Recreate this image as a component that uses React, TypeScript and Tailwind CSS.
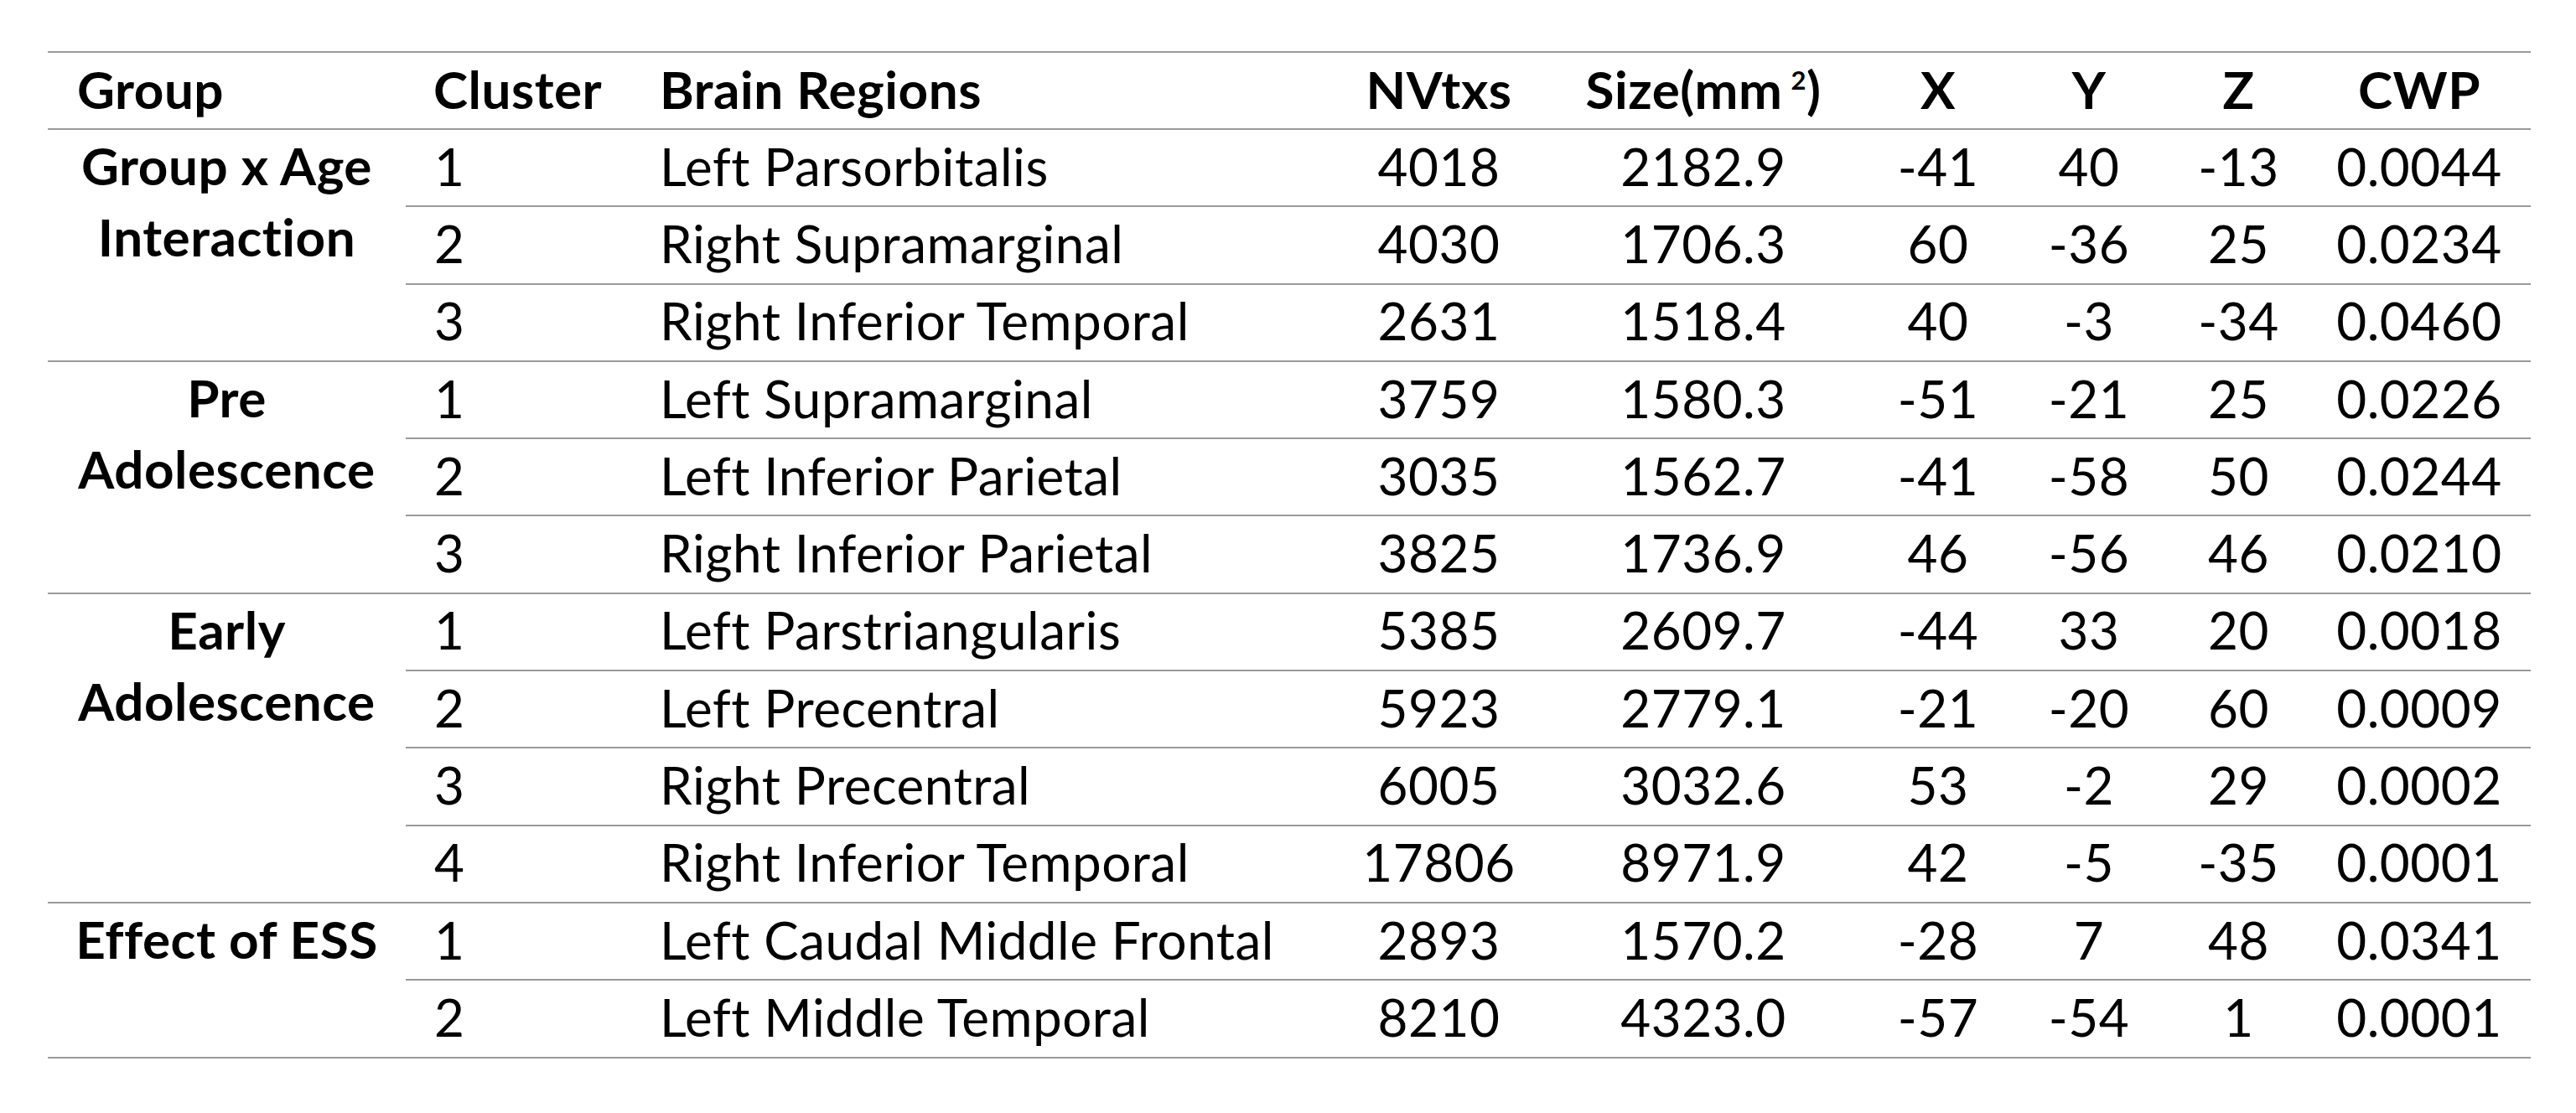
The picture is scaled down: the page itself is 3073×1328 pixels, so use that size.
import React from "react";

type Row = {
  cluster: string;
  region: string;
  nvtxs: string;
  size: string;
  x: string;
  y: string;
  z: string;
  cwp: string;
};

type Group = { label: string[]; rows: Row[] };

const groups: Group[] = [
  {
    label: ["Group x Age", "Interaction"],
    rows: [
      { cluster: "1", region: "Left Parsorbitalis", nvtxs: "4018", size: "2182.9", x: "-41", y: "40", z: "-13", cwp: "0.0044" },
      { cluster: "2", region: "Right Supramarginal", nvtxs: "4030", size: "1706.3", x: "60", y: "-36", z: "25", cwp: "0.0234" },
      { cluster: "3", region: "Right Inferior Temporal", nvtxs: "2631", size: "1518.4", x: "40", y: "-3", z: "-34", cwp: "0.0460" },
    ],
  },
  {
    label: ["Pre", "Adolescence"],
    rows: [
      { cluster: "1", region: "Left Supramarginal", nvtxs: "3759", size: "1580.3", x: "-51", y: "-21", z: "25", cwp: "0.0226" },
      { cluster: "2", region: "Left Inferior Parietal", nvtxs: "3035", size: "1562.7", x: "-41", y: "-58", z: "50", cwp: "0.0244" },
      { cluster: "3", region: "Right Inferior Parietal", nvtxs: "3825", size: "1736.9", x: "46", y: "-56", z: "46", cwp: "0.0210" },
    ],
  },
  {
    label: ["Early", "Adolescence"],
    rows: [
      { cluster: "1", region: "Left Parstriangularis", nvtxs: "5385", size: "2609.7", x: "-44", y: "33", z: "20", cwp: "0.0018" },
      { cluster: "2", region: "Left Precentral", nvtxs: "5923", size: "2779.1", x: "-21", y: "-20", z: "60", cwp: "0.0009" },
      { cluster: "3", region: "Right Precentral", nvtxs: "6005", size: "3032.6", x: "53", y: "-2", z: "29", cwp: "0.0002" },
      { cluster: "4", region: "Right Inferior Temporal", nvtxs: "17806", size: "8971.9", x: "42", y: "-5", z: "-35", cwp: "0.0001" },
    ],
  },
  {
    label: ["Effect of ESS"],
    rows: [
      { cluster: "1", region: "Left Caudal Middle Frontal", nvtxs: "2893", size: "1570.2", x: "-28", y: "7", z: "48", cwp: "0.0341" },
      { cluster: "2", region: "Left Middle Temporal", nvtxs: "8210", size: "4323.0", x: "-57", y: "-54", z: "1", cwp: "0.0001" },
    ],
  },
];

// column widths measured off the table
const numCols = [
  { key: "nvtxs", w: "w-[239px]" },
  { key: "size", w: "w-[392px]" },
  { key: "x", w: "w-[168px]" },
  { key: "y", w: "w-[192px]" },
  { key: "z", w: "w-[165px]" },
  { key: "cwp", w: "w-[266px]" },
] as const;

const DataRow = ({ row }: { row: Row }) => (
  <div className="flex h-[92.3px] items-center border-b-2 border-[#9a9a9a] pb-[5px]">
    <div className="w-[270px] pl-[34px]">{row.cluster}</div>
    <div className="w-[843px] pl-[33px] whitespace-nowrap">{row.region}</div>
    {numCols.map((c) => (
      <div key={c.key} className={`${c.w} text-center`}>
        {row[c.key]}
      </div>
    ))}
  </div>
);

export default function App() {
  return (
    <div
      className="min-h-screen bg-white pl-[57px] pt-[61px] text-[62px] leading-none tracking-[0.5px] text-black"
      style={{ fontFamily: "Lato, 'Open Sans', sans-serif" }}
    >
      <div className="w-[2962px]">
        {/* header */}
        <div className="flex h-[94px] items-center border-y-2 border-[#9a9a9a] pb-[5px] font-bold">
          <div className="w-[427px] pl-[35px]">Group</div>
          <div className="w-[270px] pl-[33px]">Cluster</div>
          <div className="w-[843px] pl-[33px]">Brain Regions</div>
          <div className="w-[239px] text-center">NVtxs</div>
          <div className="w-[392px] text-center whitespace-nowrap">
            Size(mm
            <span className="relative -top-[23px] ml-[10px] text-[31px]">2</span>)
          </div>
          <div className="w-[168px] text-center">X</div>
          <div className="w-[192px] text-center">Y</div>
          <div className="w-[165px] text-center">Z</div>
          <div className="w-[266px] text-center">CWP</div>
        </div>

        {groups.map((g) => (
          <div key={g.label.join(" ")} className="flex">
            <div className="w-[427px] shrink-0 border-b-2 border-[#9a9a9a] text-center font-bold leading-[85px]">
              {g.label.map((l) => (
                <div key={l}>{l}</div>
              ))}
            </div>
            <div className="flex flex-1 flex-col">
              {g.rows.map((r) => (
                <DataRow key={r.cluster + r.region} row={r} />
              ))}
            </div>
          </div>
        ))}
      </div>
    </div>
  );
}
